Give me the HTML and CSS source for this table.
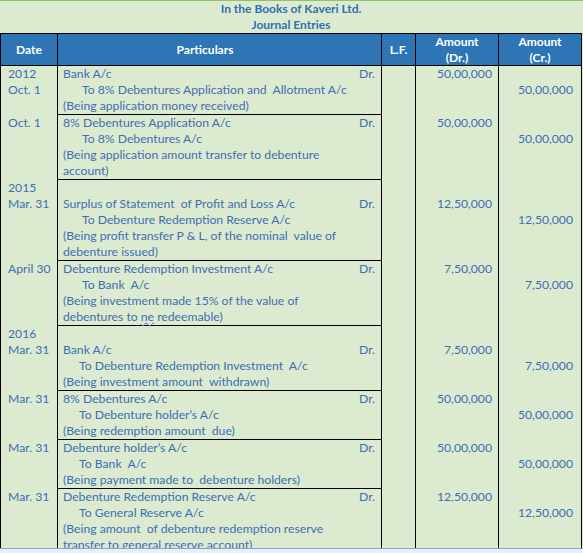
FILE: index.html
```html
<!DOCTYPE html>
<html>
<head>
<meta charset="utf-8">
<link rel="stylesheet" href="styles.css">
</head>
<body>
<div class="page">
  <div class="sheet">
    <div class="title">
      <div>In the Books of Kaveri Ltd.</div>
      <div>Journal Entries</div>
    </div>
    <div class="row head">
      <div class="cell">Date</div>
      <div class="cell part-h">Particulars</div>
      <div class="cell">L.F.</div>
      <div class="cell">Amount<br>(Dr.)</div>
      <div class="cell">Amount<br>(Cr.)</div>
    </div>

    <div class="row">
      <div class="cell date"><div>2012</div><div>Oct. 1</div></div>
      <div class="cell part">
        <div class="ln acct"><span>Bank A/c</span><span>Dr.</span></div>
        <div class="ln to">To 8% Debentures Application and&nbsp; Allotment A/c</div>
        <div class="ln">(Being application money received)</div>
      </div>
      <div class="cell lf"></div>
      <div class="cell amt dr"><div>50,00,000</div></div>
      <div class="cell amt cr"><div>&nbsp;</div><div>50,00,000</div></div>
    </div>

    <div class="row">
      <div class="cell date"><div>Oct. 1</div></div>
      <div class="cell part">
        <div class="ln acct"><span>8% Debentures Application A/c</span><span>Dr.</span></div>
        <div class="ln to">To 8% Debentures A/c</div>
        <div class="ln">(Being application amount transfer to debenture</div>
        <div class="ln">account)</div>
      </div>
      <div class="cell lf"></div>
      <div class="cell amt dr"><div>50,00,000</div></div>
      <div class="cell amt cr"><div>&nbsp;</div><div>50,00,000</div></div>
    </div>

    <div class="row">
      <div class="cell date"><div>2015</div><div>Mar. 31</div></div>
      <div class="cell part">
        <div class="ln">&nbsp;</div>
        <div class="ln acct"><span>Surplus of Statement&nbsp; of Profit and Loss A/c</span><span>Dr.</span></div>
        <div class="ln to">To Debenture Redemption Reserve A/c</div>
        <div class="ln">(Being profit transfer P &amp; L, of the nominal&nbsp; value of</div>
        <div class="ln">debenture issued)</div>
      </div>
      <div class="cell lf"></div>
      <div class="cell amt dr"><div>&nbsp;</div><div>12,50,000</div></div>
      <div class="cell amt cr"><div>&nbsp;</div><div>&nbsp;</div><div>12,50,000</div></div>
    </div>

    <div class="row">
      <div class="cell date"><div>April 30</div></div>
      <div class="cell part">
        <div class="ln acct"><span>Debenture Redemption Investment A/c</span><span>Dr.</span></div>
        <div class="ln to">To Bank&nbsp; A/c</div>
        <div class="ln">(Being investment made 15% of the value of</div>
        <div class="ln">debentures to <span class="sq">ne</span> redeemable)</div>
      </div>
      <div class="cell lf"></div>
      <div class="cell amt dr"><div>7,50,000</div></div>
      <div class="cell amt cr"><div>&nbsp;</div><div>7,50,000</div></div>
    </div>

    <div class="row">
      <div class="cell date"><div>2016</div><div>Mar. 31</div></div>
      <div class="cell part">
        <div class="ln">&nbsp;</div>
        <div class="ln acct"><span>Bank A/c</span><span>Dr.</span></div>
        <div class="ln to2">To Debenture Redemption Investment&nbsp; A/c</div>
        <div class="ln">(Being investment amount&nbsp; withdrawn)</div>
      </div>
      <div class="cell lf"></div>
      <div class="cell amt dr"><div>&nbsp;</div><div>7,50,000</div></div>
      <div class="cell amt cr"><div>&nbsp;</div><div>&nbsp;</div><div>7,50,000</div></div>
    </div>

    <div class="row">
      <div class="cell date"><div>Mar. 31</div></div>
      <div class="cell part">
        <div class="ln acct"><span>8% Debentures A/c</span><span>Dr.</span></div>
        <div class="ln to2">To Debenture holder’s A/c</div>
        <div class="ln">(Being redemption amount&nbsp; due)</div>
      </div>
      <div class="cell lf"></div>
      <div class="cell amt dr"><div>50,00,000</div></div>
      <div class="cell amt cr"><div>&nbsp;</div><div>50,00,000</div></div>
    </div>

    <div class="row">
      <div class="cell date"><div>Mar. 31</div></div>
      <div class="cell part">
        <div class="ln acct"><span>Debenture holder’s A/c</span><span>Dr.</span></div>
        <div class="ln to2">To Bank&nbsp; A/c</div>
        <div class="ln">(Being payment made to&nbsp; debenture holders)</div>
      </div>
      <div class="cell lf"></div>
      <div class="cell amt dr"><div>50,00,000</div></div>
      <div class="cell amt cr"><div>&nbsp;</div><div>50,00,000</div></div>
    </div>

    <div class="row">
      <div class="cell date"><div>Mar. 31</div></div>
      <div class="cell part">
        <div class="ln acct"><span>Debenture Redemption Reserve A/c</span><span>Dr.</span></div>
        <div class="ln to2">To General Reserve A/c</div>
        <div class="ln">(Being amount&nbsp; of debenture redemption reserve</div>
        <div class="ln">transfer to general reserve account)</div>
      </div>
      <div class="cell lf"></div>
      <div class="cell amt dr"><div>12,50,000</div></div>
      <div class="cell amt cr"><div>&nbsp;</div><div>12,50,000</div></div>
    </div>
  </div>
  <div class="strip"></div>
</div>
</body>
</html>
```

FILE: styles.css
```css
html, body {
  margin: 0;
  padding: 0;
  background: #dceacf;
}
.page {
  width: 583px;
  height: 553px;
  overflow: hidden;
  display: flex;
  flex-direction: column;
}
.sheet {
  height: 548px;
  overflow: hidden;
  border-top: 1px solid #8cc36b;
  box-sizing: border-box;
  font-family: Lato, "Liberation Sans", sans-serif;
  font-size: 12.2px;
  color: #3d6fb5;
}
.strip {
  flex: 1;
  border-top: 1px solid #7ea6d6;
  background: #e7eff9;
}
.title {
  width: 582px;
  text-align: center;
  font-weight: bold;
  font-size: 12px;
  color: #2f70b4;
  line-height: 16px;
}
.row {
  display: grid;
  grid-template-columns: 57px 324px 34px 83px 83px;
  width: 582px;
  box-sizing: border-box;
  border-left: 1px solid #000;
}
.cell {
  border-right: 1px solid #000;
  line-height: 16px;
}
.head {
  background: #2e75b6;
  border-top: 1px solid #000;
  border-bottom: 1px solid #000;
  color: #fff;
  font-weight: bold;
  font-size: 12px;
}
.head .cell {
  height: 31px;
  display: flex;
  align-items: center;
  justify-content: center;
  text-align: center;
}
.head .part-h {
  padding-right: 29px;
}
.date {
  padding-left: 7px;
}
.part {
  border-bottom: 1px solid #000;
  padding-left: 5px;
  padding-right: 6px;
}
.ln {
  white-space: nowrap;
}
.acct {
  display: flex;
  justify-content: space-between;
}
.to {
  padding-left: 19px;
}
.to2 {
  padding-left: 16px;
}
.amt {
  text-align: right;
}
.dr {
  padding-right: 6px;
}
.cr {
  padding-right: 8px;
}
.sq {
  text-decoration: underline wavy #6a6ad8;
  text-decoration-thickness: 1px;
}
```
